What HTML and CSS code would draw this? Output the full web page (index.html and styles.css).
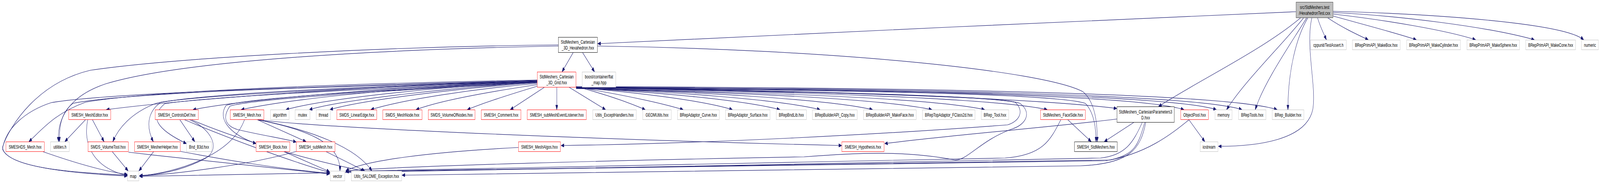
FILE: index.html
```html
<!DOCTYPE html>
<html>
<head>
<meta charset="utf-8">
<title>HexahedronTest.cxx include graph</title>
<link rel="stylesheet" href="styles.css">
</head>
<body>
<div class="frame">
<div class="graph" id="graph">
<svg class="edges" width="6368" height="469" viewBox="0 0 6368 469">
<defs>
<marker id="arrow" markerUnits="userSpaceOnUse" markerWidth="12" markerHeight="9" refX="12" refY="4.5" orient="auto">
<path class="head" d="M0,0 L12,4.5 L0,9 z"/>
</marker>
</defs>
<g class="lines">
<path d="M5158,30 C4500,48 3000,92 2379,112"/>
<path d="M5176,46 C5020,130 4760,210 4611,273"/>
<path d="M5188,46 C5110,110 4950,210 4882,281"/>
<path d="M5200,46 C5150,100 5030,210 4996,281"/>
<path d="M5205,46 C5160,95 5126,180 5126,281"/>
<path d="M5221,46 C5195,120 5240,220 5225,280 C5200,360 5000,375 4849,375"/>
<path d="M5244,46 C5255,70 5268,85 5279,102"/>
<path d="M5285,46 C5340,70 5400,88 5446,102"/>
<path d="M5306,41 C5420,62 5560,85 5637,102"/>
<path d="M5306,36 C5520,52 5760,78 5873,102"/>
<path d="M5306,32 C5560,40 5920,68 6107,102"/>
<path d="M5306,29 C5720,36 6230,60 6303,102"/>
<path d="M2281,135 L2237,184"/>
<path d="M2319,135 L2366,184"/>
<path d="M2378,118 C3300,126 4150,180 4310,235 C4360,262 4368,320 4367,363"/>
<path d="M2222,118 C1400,128 700,160 420,215 C250,252 228,320 233,363"/>
<path d="M2222,115 C1500,120 700,148 360,180 C150,212 40,320 10,377 C20,432 300,442 507,449"/>
<path d="M2138,206 C1500,220 800,250 423,281"/>
<path d="M2138,208 C1600,222 1000,252 768,281"/>
<path d="M2138,209 C1700,220 1200,248 960,281"/>
<path d="M2138,210 C1750,222 1300,252 1138,281"/>
<path d="M2138,211 C1800,224 1360,256 1231,281"/>
<path d="M2138,212 C1820,226 1430,258 1313,281"/>
<path d="M2138,214 C1880,228 1600,256 1476,281"/>
<path d="M2138,217 C1960,234 1750,258 1656,281"/>
<path d="M2138,221 C2040,240 1930,262 1860,281"/>
<path d="M2166,224 L2031,281"/>
<path d="M2216,224 L2216,281"/>
<path d="M2266,224 L2410,281"/>
<path d="M2293,222 C2400,240 2500,262 2568,281"/>
<path d="M2293,223 C2450,240 2620,262 2719,281"/>
<path d="M2293,224 C2550,238 2800,258 2915,281"/>
<path d="M2293,225 C2600,236 2950,255 3104,281"/>
<path d="M2293,226 C2700,236 3100,255 3264,281"/>
<path d="M2293,226 C2800,236 3300,255 3473,281"/>
<path d="M2293,227 C2900,236 3500,252 3709,281"/>
<path d="M2293,227 C3000,236 3700,250 3919,281"/>
<path d="M2293,226 C3100,234 3950,250 4168,281"/>
<path d="M2293,225 C3200,232 4100,250 4445,278"/>
<path d="M2293,224 C3300,230 4500,238 4712,281"/>
<path d="M2293,224 C3400,228 4650,240 4841,281"/>
<path d="M2293,223 C3500,226 4750,240 4943,281"/>
<path d="M2293,222 C3600,224 4880,238 5083,281"/>
<path d="M2293,224 C3300,232 4200,238 4320,265 C4356,290 4362,330 4362,363"/>
<path d="M2293,224 C3200,236 3950,245 4040,262 C4080,285 4055,312 4010,320 C3500,345 2800,368 2233,373"/>
<path d="M2293,223 C3200,234 3980,245 4060,265 C4110,290 4080,320 4030,330 C3900,360 3850,412 3800,410 C3600,385 3400,392 3200,402 C2500,410 1600,425 1376,438"/>
<path d="M2138,205 C1400,214 600,232 340,262 C220,290 170,330 115,363"/>
<path d="M2138,207 C1400,220 500,236 290,265 C240,290 235,330 237,363"/>
<path d="M2138,208 C1400,222 800,240 620,265 C520,290 470,330 449,363"/>
<path d="M2138,209 C1400,224 800,245 640,262 C580,290 585,330 610,363"/>
<path d="M2138,210 C1400,228 800,250 655,266 C595,300 620,330 742,368"/>
<path d="M2138,206 C1400,220 450,236 204,263 C100,285 20,330 10,383 C40,430 300,445 507,451"/>
<path d="M2138,210 C1500,232 1000,250 900,270 C868,300 900,340 1019,368"/>
<path d="M2138,211 C1500,234 1000,254 915,272 C885,300 895,322 945,332 C1050,348 1130,355 1179,364"/>
<path d="M168,388 C300,418 420,440 507,447"/>
<path d="M340,307 L258,363"/>
<path d="M349,307 C330,370 370,430 507,450"/>
<path d="M368,307 L414,363"/>
<path d="M446,388 L510,438"/>
<path d="M511,390 C800,412 1100,432 1312,446"/>
<path d="M612,388 L553,438"/>
<path d="M718,388 C900,410 1100,432 1312,444"/>
<path d="M716,307 L775,363"/>
<path d="M735,307 C900,352 1150,412 1312,442"/>
<path d="M755,307 C840,330 880,380 820,405 C720,440 620,448 555,450"/>
<path d="M762,307 C1000,372 1300,420 1449,438"/>
<path d="M1025,307 L1218,363"/>
<path d="M1025,307 C1200,330 1356,360 1353,438"/>
<path d="M1030,307 C1250,335 1420,380 1480,438"/>
<path d="M973,307 C920,400 700,442 555,451"/>
<path d="M1030,307 C1300,330 2500,360 3350,373"/>
<path d="M1128,388 L1312,440"/>
<path d="M1296,388 L1452,438"/>
<path d="M1179,388 C1000,422 700,446 555,451"/>
<path d="M2063,378 C1700,390 1450,412 1376,438"/>
<path d="M4250,307 L4343,363"/>
<path d="M4222,307 C4180,360 4150,398 4000,405 C3000,420 1600,430 1376,439"/>
<path d="M4512,314 L4395,363"/>
<path d="M4445,305 C4200,325 3800,345 3521,368"/>
<path d="M4546,314 C4510,365 4480,398 4380,405 C3000,425 800,446 555,452"/>
<path d="M4556,314 C4530,370 4520,395 4420,410 C3000,428 1600,432 1376,440"/>
<path d="M4560,314 C4540,380 4500,420 4300,425 C3000,440 1800,447 1600,449"/>
<path d="M4732,307 L4795,363"/>
<path d="M4732,307 C4660,345 4560,395 4400,412 C3000,430 1600,434 1376,440"/>
</g>
</svg>

<div class="node root" style="left:5158px;top:5px;width:148px;height:41px">src/StdMeshers.test<br>/HexahedronTest.cxx</div>
<div class="node black" style="left:2222px;top:95px;width:156px;height:40px">StdMeshers_Cartesian<br>_3D_Hexahedron.hxx</div>
<div class="node grey" style="left:5215px;top:102px;width:144px;height:26px">cppunit/TestAssert.h</div>
<div class="node grey" style="left:5382px;top:102px;width:191px;height:26px">BRepPrimAPI_MakeBox.hxx</div>
<div class="node grey" style="left:5598px;top:102px;width:215px;height:26px">BRepPrimAPI_MakeCylinder.hxx</div>
<div class="node grey" style="left:5838px;top:102px;width:210px;height:26px">BRepPrimAPI_MakeSphere.hxx</div>
<div class="node grey" style="left:6072px;top:102px;width:199px;height:26px">BRepPrimAPI_MakeCone.hxx</div>
<div class="node grey" style="left:6294px;top:102px;width:68px;height:26px">numeric</div>

<div class="node red" style="left:2138px;top:184px;width:155px;height:40px">StdMeshers_Cartesian<br>_3D_Grid.hxx</div>
<div class="node grey" style="left:2317px;top:184px;width:134px;height:40px">boost/container/flat<br>_map.hpp</div>

<div class="node red" style="left:273px;top:281px;width:168px;height:26px">SMESH_MeshEditor.hxx</div>
<div class="node red" style="left:617px;top:281px;width:173px;height:26px">SMESH_ControlsDef.hxx</div>
<div class="node red" style="left:916px;top:281px;width:135px;height:26px">SMESH_Mesh.hxx</div>
<div class="node grey" style="left:1076px;top:281px;width:75px;height:26px">algorithm</div>
<div class="node grey" style="left:1174px;top:281px;width:60px;height:26px">mutex</div>
<div class="node grey" style="left:1258px;top:281px;width:58px;height:26px">thread</div>
<div class="node red" style="left:1340px;top:281px;width:160px;height:26px">SMDS_LinearEdge.hxx</div>
<div class="node red" style="left:1523px;top:281px;width:157px;height:26px">SMDS_MeshNode.hxx</div>
<div class="node red" style="left:1704px;top:281px;width:187px;height:26px">SMDS_VolumeOfNodes.hxx</div>
<div class="node red" style="left:1915px;top:281px;width:159px;height:26px">SMESH_Comment.hxx</div>
<div class="node red" style="left:2098px;top:281px;width:236px;height:26px">SMESH_subMeshEventListener.hxx</div>
<div class="node grey" style="left:2359px;top:281px;width:174px;height:26px">Utils_ExceptHandlers.hxx</div>
<div class="node grey" style="left:2558px;top:281px;width:114px;height:26px">GEOMUtils.hxx</div>
<div class="node grey" style="left:2696px;top:281px;width:167px;height:26px">BRepAdaptor_Curve.hxx</div>
<div class="node grey" style="left:2887px;top:281px;width:178px;height:26px">BRepAdaptor_Surface.hxx</div>
<div class="node grey" style="left:3089px;top:281px;width:121px;height:26px">BRepBndLib.hxx</div>
<div class="node grey" style="left:3233px;top:281px;width:179px;height:26px">BRepBuilderAPI_Copy.hxx</div>
<div class="node grey" style="left:3436px;top:281px;width:211px;height:26px">BRepBuilderAPI_MakeFace.hxx</div>
<div class="node grey" style="left:3671px;top:281px;width:210px;height:26px">BRepTopAdaptor_FClass2d.hxx</div>
<div class="node grey" style="left:3905px;top:281px;width:110px;height:26px">BRep_Tool.hxx</div>
<div class="node red" style="left:4141px;top:281px;width:179px;height:26px">StdMeshers_FaceSide.hxx</div>
<div class="node black" style="left:4445px;top:273px;width:229px;height:41px">StdMeshers_CartesianParameters3<br>D.hxx</div>
<div class="node red" style="left:4699px;top:281px;width:111px;height:26px">ObjectPool.hxx</div>
<div class="node grey" style="left:4835px;top:281px;width:69px;height:26px">memory</div>
<div class="node grey" style="left:4929px;top:281px;width:110px;height:26px">BRepTools.hxx</div>
<div class="node grey" style="left:5063px;top:281px;width:127px;height:26px">BRep_Builder.hxx</div>

<div class="node red" style="left:23px;top:363px;width:154px;height:26px">SMESHDS_Mesh.hxx</div>
<div class="node grey" style="left:201px;top:363px;width:75px;height:26px">utilities.h</div>
<div class="node red" style="left:350px;top:363px;width:161px;height:26px">SMDS_VolumeTool.hxx</div>
<div class="node red" style="left:535px;top:363px;width:183px;height:26px">SMESH_MesherHelper.hxx</div>
<div class="node grey" style="left:742px;top:363px;width:100px;height:26px">Bnd_B3d.hxx</div>
<div class="node red" style="left:1019px;top:363px;width:135px;height:26px">SMESH_Block.hxx</div>
<div class="node red" style="left:1179px;top:363px;width:155px;height:26px">SMESH_subMesh.hxx</div>
<div class="node red" style="left:2063px;top:363px;width:168px;height:26px">SMESH_MeshAlgos.hxx</div>
<div class="node red" style="left:3350px;top:363px;width:169px;height:26px">SMESH_Hypothesis.hxx</div>
<div class="node black" style="left:4276px;top:363px;width:171px;height:26px">SMESH_StdMeshers.hxx</div>
<div class="node grey" style="left:4776px;top:363px;width:72px;height:26px">iostream</div>

<div class="node grey" style="left:507px;top:438px;width:46px;height:26px">map</div>
<div class="node grey" style="left:1314px;top:438px;width:59px;height:26px">vector</div>
<div class="node grey" style="left:1398px;top:438px;width:201px;height:26px">Utils_SALOME_Exception.hxx</div>
</div>
</div>
<script src="script.js"></script>
</body>
</html>
```

FILE: styles.css
```css
html, body {
  margin: 0;
  padding: 0;
  background: #ffffff;
  overflow: hidden;
}

.frame {
  width: 100vw;
  height: 469px;
  overflow: hidden;
}

.graph {
  position: relative;
  width: 6368px;
  height: 469px;
  background: #ffffff;
  font-family: "Liberation Sans", Arial, Helvetica, sans-serif;
  font-size: 13.33px;
  line-height: 15px;
  color: #000000;
  transform-origin: 0 0;
  transform: scaleX(0.643216);
}

.edges {
  position: absolute;
  left: 0;
  top: 0;
}

.lines path {
  fill: none;
  stroke: #191970;
  stroke-width: 1.2;
  marker-end: url(#arrow);
}

.head {
  fill: #191970;
  stroke: #191970;
  stroke-width: 1;
}

.node {
  position: absolute;
  box-sizing: border-box;
  display: flex;
  flex-direction: column;
  align-items: center;
  justify-content: center;
  text-align: center;
  white-space: nowrap;
  background: #ffffff;
  border: 1px solid #bfbfbf;
}

.node.red {
  border-color: #ff0000;
}

.node.grey {
  border-color: #bfbfbf;
}

.node.black {
  border-color: #000000;
}

.node.root {
  background: #bfbfbf;
  border-color: #404040;
}
```

FILE: script.js
```js
(function () {
  var g = document.getElementById('graph');
  var s = Math.min(1, window.innerWidth / 6368);
  g.style.transform = 'scaleX(' + s + ')';
})();
```
